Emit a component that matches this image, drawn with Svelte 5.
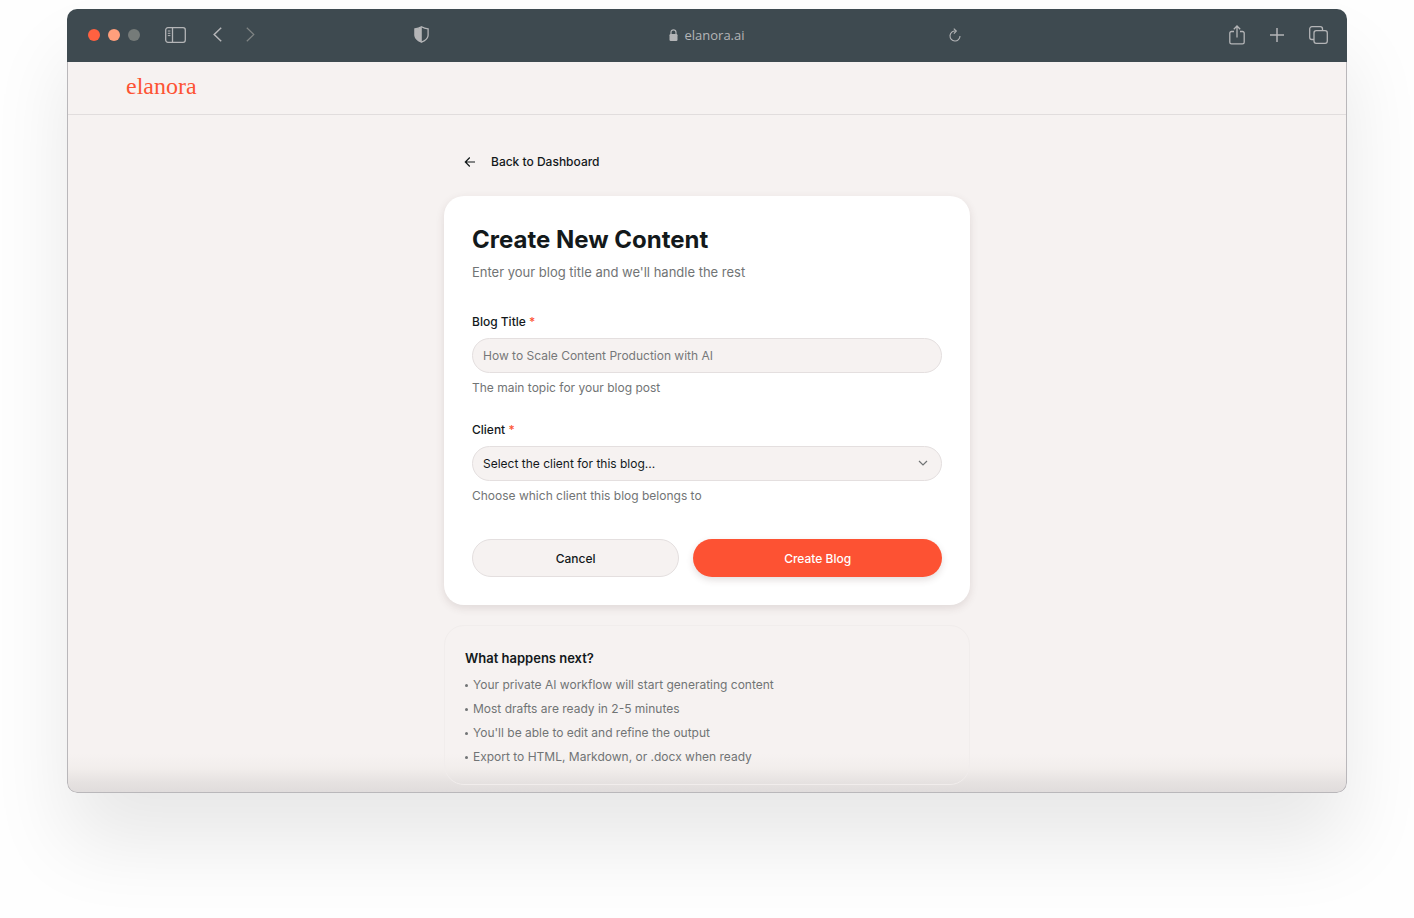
<script lang="ts">
  let title = '';
  let client = '';

  const clients = ['Acme Studio', 'Northwind', 'Globex'];

  const steps = [
    'Your private AI workflow will start generating content',
    'Most drafts are ready in 2-5 minutes',
    "You'll be able to edit and refine the output",
    'Export to HTML, Markdown, or .docx when ready'
  ];

  function reset() {
    title = '';
    client = '';
  }
</script>

<div class="page">
  <div class="window">
    <div class="toolbar">
      <div class="toolbar-left">
        <div class="lights">
          <span class="light red"></span>
          <span class="light orange"></span>
          <span class="light gray"></span>
        </div>
        <button class="tool sidebar" aria-label="Show sidebar">
          <svg width="21" height="16" viewBox="0 0 21 16" fill="none" stroke="currentColor" stroke-width="1.3">
            <rect x="0.7" y="0.7" width="19.6" height="14.6" rx="2.2" />
            <path d="M7.5 1v14" />
            <path d="M2.8 4h2.6M2.8 6.3h2.6M2.8 8.6h2.6" stroke-width="1" />
          </svg>
        </button>
        <button class="tool back" aria-label="Back">
          <svg width="9" height="15" viewBox="0 0 9 15" fill="none" stroke="currentColor" stroke-width="1.5">
            <path d="M8.2 0.8L1.2 7.5l7 6.7" />
          </svg>
        </button>
        <button class="tool forward" aria-label="Forward">
          <svg width="9" height="15" viewBox="0 0 9 15" fill="none" stroke="currentColor" stroke-width="1.2">
            <path d="M0.8 0.8l7 6.7-7 6.7" />
          </svg>
        </button>
        <button class="tool shield" aria-label="Privacy report">
          <svg width="15" height="17" viewBox="0 0 15 17">
            <path d="M7.5 0.8c2 1.2 4 1.8 6.6 2v6.4c0 3.2-2.6 5.3-6.6 7-4-1.7-6.6-3.8-6.6-7V2.8c2.6-.2 4.6-.8 6.6-2z" fill="none" stroke="currentColor" stroke-width="1.3" />
            <path d="M7.8 0.8c-2 1.2-4.3 1.8-6.9 2v6.4c0 3.2 2.6 5.3 6.9 7z" fill="currentColor" />
          </svg>
        </button>
      </div>

      <div class="address">
        <svg width="9" height="12" viewBox="0 0 9 12">
          <path d="M2 6V3.3a2.5 2.5 0 0 1 5 0V6" fill="none" stroke="currentColor" stroke-width="1.2" />
          <rect x="0.5" y="5" width="8" height="7" rx="1.2" fill="currentColor" />
        </svg>
        <span>elanora.ai</span>
      </div>

      <div class="toolbar-right">
        <button class="tool reload" aria-label="Reload">
          <svg width="12" height="14" viewBox="0 0 12 14" fill="none" stroke="currentColor" stroke-width="1.1">
            <path d="M6.5 3A5 5 0 1 0 11 8" />
            <path d="M4.8 0.7L7.3 3.1 4.9 5.7" />
          </svg>
        </button>
        <div class="actions">
          <button class="tool" aria-label="Share">
            <svg width="16" height="20" viewBox="0 0 16 20" fill="none" stroke="currentColor" stroke-width="1.3">
              <path d="M5 6.5H2.5a1.7 1.7 0 0 0-1.7 1.7v9a1.7 1.7 0 0 0 1.7 1.7h11a1.7 1.7 0 0 0 1.7-1.7v-9a1.7 1.7 0 0 0-1.7-1.7H11" />
              <path d="M8 12.5V1.2M4.8 4.2L8 1l3.2 3.2" />
            </svg>
          </button>
          <button class="tool" aria-label="New tab">
            <svg width="14" height="14" viewBox="0 0 14 14" fill="none" stroke="currentColor" stroke-width="1.5">
              <path d="M7 0v14M0 7h14" />
            </svg>
          </button>
          <button class="tool" aria-label="Show tabs">
            <svg width="19" height="18" viewBox="0 0 19 18" fill="none" stroke="currentColor" stroke-width="1.3">
              <rect x="5" y="4.7" width="13.3" height="12.6" rx="2.2" />
              <path d="M5 13.5H2.9A2.2 2.2 0 0 1 0.7 11.3V2.9A2.2 2.2 0 0 1 2.9 0.7h8.4a2.2 2.2 0 0 1 2.2 2.2v1.8" />
            </svg>
          </button>
        </div>
      </div>
    </div>

    <div class="screen">
      <header class="site-header">
        <a class="logo" href="#home">elanora</a>
      </header>

      <main>
        <a class="back-link" href="#dashboard">
          <svg width="12" height="12" viewBox="0 0 12 12" fill="none" stroke="currentColor" stroke-width="1.2">
            <path d="M11 6H1.5M5.8 1.5L1.3 6l4.5 4.5" />
          </svg>
          Back to Dashboard
        </a>

        <form class="card" on:submit|preventDefault>
          <h1>Create New Content</h1>
          <p class="intro">Enter your blog title and we'll handle the rest</p>

          <div class="field">
            <label for="blog-title">Blog Title <span class="required">*</span></label>
            <input
              id="blog-title"
              type="text"
              placeholder="How to Scale Content Production with AI"
              bind:value={title}
            />
            <p class="hint">The main topic for your blog post</p>
          </div>

          <div class="field">
            <label for="client">Client <span class="required">*</span></label>
            <div class="select-wrap">
              <select id="client" bind:value={client}>
                <option value="">Select the client for this blog...</option>
                {#each clients as name}
                  <option value={name}>{name}</option>
                {/each}
              </select>
              <svg class="chevron" width="10" height="6" viewBox="0 0 10 6" fill="none" stroke="currentColor" stroke-width="1.2">
                <path d="M1 1l4 4 4-4" />
              </svg>
            </div>
            <p class="hint">Choose which client this blog belongs to</p>
          </div>

          <div class="buttons">
            <button type="button" class="btn btn-secondary" on:click={reset}>Cancel</button>
            <button type="submit" class="btn btn-primary">Create Blog</button>
          </div>
        </form>

        <section class="next">
          <h2>What happens next?</h2>
          <ul>
            {#each steps as step}
              <li>{step}</li>
            {/each}
          </ul>
        </section>
      </main>
    </div>
  </div>
</div>

<style>
  :global(body) {
    background-color: #fefefe;
    font-family: Inter, "Liberation Sans", sans-serif;
    color: #13191b;
  }

  .page {
    padding: 9px 67px 125px;
  }

  .window {
    border-radius: 10px;
    overflow: hidden;
    box-shadow: 0 50px 80px rgba(0, 0, 0, 0.09);
  }

  /* Browser toolbar */
  .toolbar {
    display: grid;
    grid-template-columns: 1fr auto 1fr;
    align-items: center;
    height: 53px;
    padding-bottom: 2px;
    box-sizing: border-box;
    background-color: #3e4a50;
    color: #b4b5b7;
  }

  .toolbar-left,
  .toolbar-right,
  .lights,
  .actions,
  .address {
    display: flex;
    align-items: center;
  }

  .toolbar-left {
    padding-left: 21px;
  }

  .lights {
    gap: 8px;
  }

  .light {
    width: 12px;
    height: 12px;
    border-radius: 50%;
  }

  .red {
    background-color: #ff6140;
  }

  .orange {
    background-color: #ff9f7c;
  }

  .gray {
    background-color: #757b79;
  }

  .tool {
    display: flex;
    padding: 0;
    border: none;
    background: none;
    color: inherit;
    cursor: pointer;
  }

  .sidebar {
    margin-left: 25px;
  }

  .back {
    margin-left: 27px;
  }

  .forward {
    margin-left: 24px;
    color: #7f8484;
  }

  .shield {
    margin-left: auto;
    margin-right: 240px;
  }

  .address {
    gap: 6px;
    font-family: "Open Sans", "Noto Sans", sans-serif;
    font-size: 13px;
    font-weight: 400;
  }

  .reload {
    margin-left: 204px;
    margin-right: auto;
  }

  .actions {
    gap: 25px;
    padding-right: 19px;
  }

  /* Page inside the window */
  .screen {
    border: 1px solid #b9b7ba;
    border-top: none;
    border-radius: 0 0 10px 10px;
    background: linear-gradient(to top, #e0dcdc 0, #e6e2e1 10px, #f2eeec 24px, #f6f2f1 38px);
  }

  .site-header {
    display: flex;
    align-items: center;
    height: 48px;
    padding: 0 58px 4px;
    border-bottom: 1px solid #e1dddd;
  }

  .logo {
    font-family: "Liberation Serif", serif;
    font-size: 24px;
    line-height: 28px;
    color: #fd5434;
    text-decoration: none;
  }

  main {
    max-width: 526px;
    margin: 0 auto;
    padding: 37px 16px 7px;
  }

  .back-link {
    display: inline-flex;
    align-items: center;
    gap: 15px;
    margin-left: 20px;
    font-size: 12px;
    font-weight: 500;
    line-height: 20px;
    color: inherit;
    text-decoration: none;
  }

  .card {
    margin-top: 24px;
    padding: 28px;
    border-radius: 20px;
    background-color: #fff;
    box-shadow: 0 3px 8px rgba(80, 50, 50, 0.13);
  }

  h1 {
    margin: 0;
    font-size: 24px;
    font-weight: 700;
    line-height: 32px;
  }

  .intro {
    margin: 6px 0 32px;
    font-size: 13px;
    line-height: 20px;
    color: #717475;
  }

  .field {
    display: flex;
    flex-direction: column;
    margin-bottom: 26px;
  }

  label {
    margin-bottom: 8px;
    font-size: 12px;
    font-weight: 500;
    line-height: 16px;
  }

  .required {
    color: #fd5434;
  }

  input,
  select {
    width: 100%;
    height: 35px;
    padding: 0 10px;
    box-sizing: border-box;
    border: 1px solid #e4dfdf;
    border-radius: 18px;
    background-color: #f6f2f1;
    font-family: inherit;
    font-size: 12px;
    color: inherit;
  }

  input::placeholder {
    color: #767879;
  }

  select {
    appearance: none;
  }

  .select-wrap {
    position: relative;
  }

  .chevron {
    position: absolute;
    top: 14px;
    right: 14px;
    color: #717475;
    pointer-events: none;
  }

  .hint {
    margin: 7px 0 0;
    font-size: 12px;
    line-height: 16px;
    color: #717475;
  }

  .buttons {
    display: grid;
    grid-template-columns: 5fr 6fr;
    gap: 14px;
    margin-top: 35px;
  }

  .btn {
    height: 38px;
    border-radius: 19px;
    font-family: inherit;
    font-size: 12px;
    font-weight: 500;
    cursor: pointer;
  }

  .btn-secondary {
    border: 1px solid #e4dfdf;
    background-color: #f6f2f1;
    color: inherit;
  }

  .btn-primary {
    border: none;
    background-color: #fd5233;
    color: #fff;
    box-shadow: 0 3px 7px rgba(80, 50, 50, 0.16);
  }

  .next {
    margin-top: 20px;
    padding: 22px 20px 15px;
    border: 1px solid #f1edec;
    border-radius: 20px;
  }

  h2 {
    margin: 0 0 5px;
    font-size: 13px;
    font-weight: 600;
    line-height: 20px;
  }

  ul {
    margin: 0;
    padding: 0;
    list-style: none;
  }

  li {
    display: flex;
    align-items: center;
    gap: 5px;
    font-size: 12px;
    line-height: 24px;
    color: #717475;
  }

  li::before {
    content: "";
    width: 3px;
    height: 3px;
    border-radius: 50%;
    background-color: currentColor;
  }
</style>
